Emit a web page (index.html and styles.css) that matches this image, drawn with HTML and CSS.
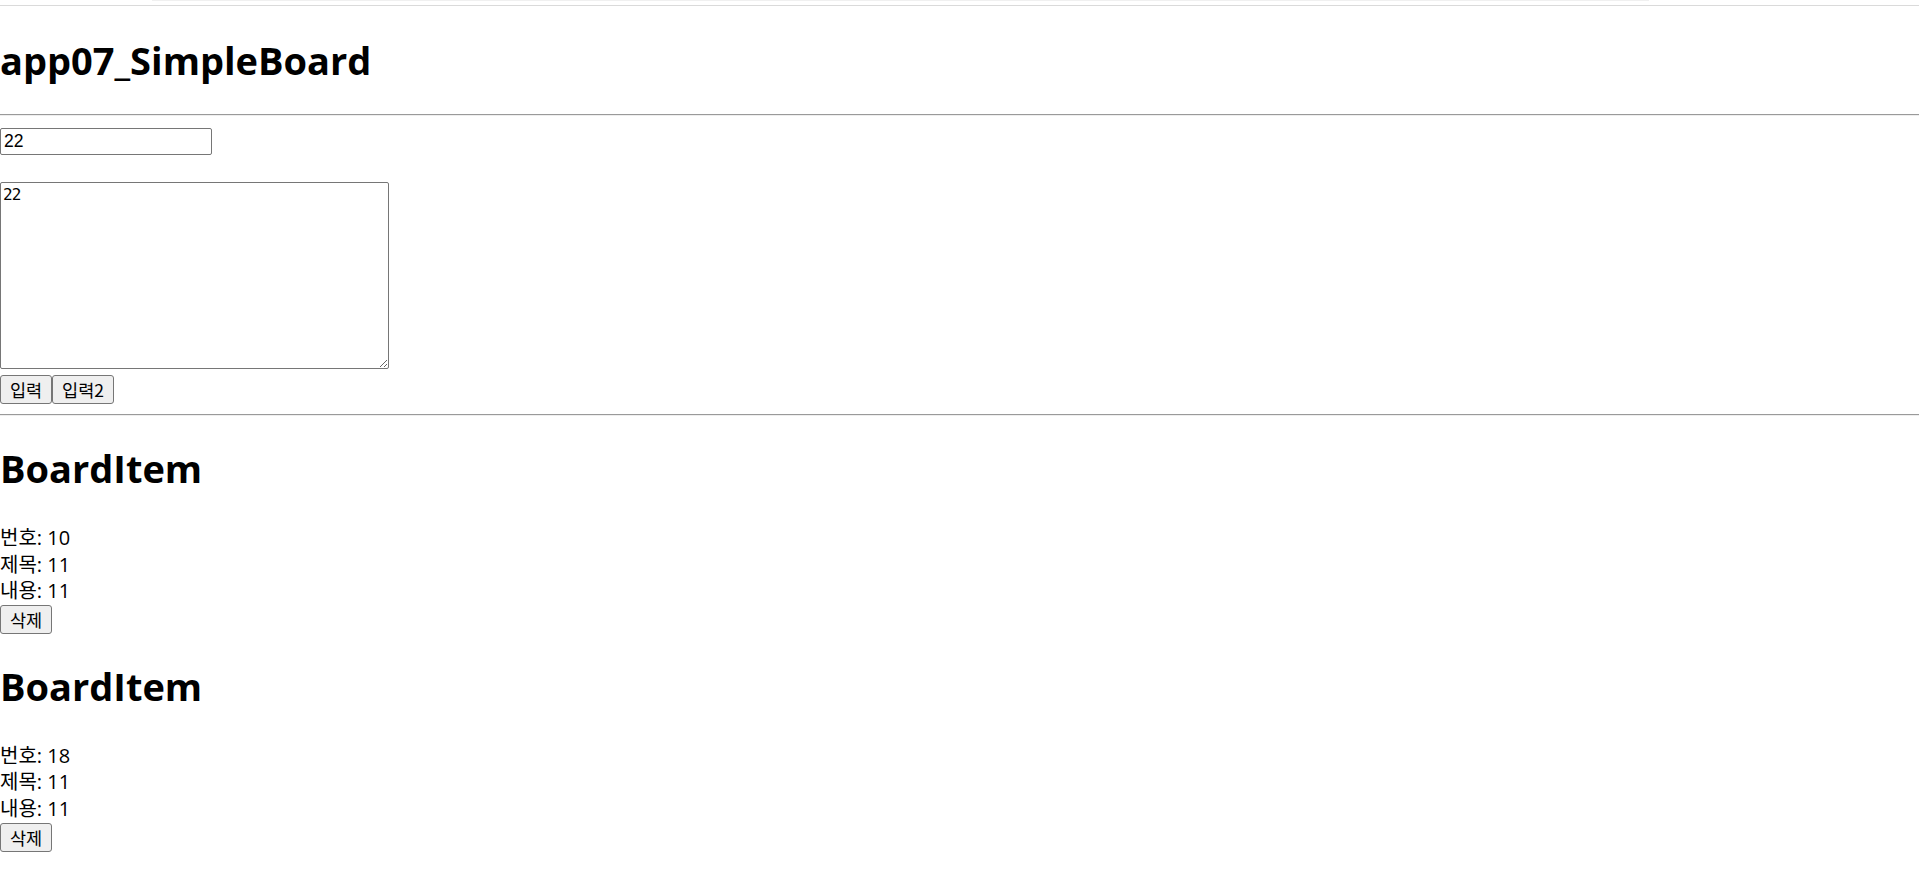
FILE: index.html
```html
<!DOCTYPE html>
<html lang="ko">
<head>
<meta charset="utf-8">
<title>app07_SimpleBoard</title>
<link rel="stylesheet" href="styles.css">
</head>
<body>
<div class="topbar"><div class="topband"></div></div>
<div class="app">
  <h1 class="title">app07_SimpleBoard</h1>
  <hr class="rule">
  <div class="form">
    <div class="row"><input class="field" type="text" value="22"></div>
    <div class="row"><textarea class="area">22</textarea></div>
    <div class="buttons"><button class="btn btn-a">입력</button><button class="btn btn-b">입력2</button></div>
  </div>
  <hr class="rule">
  <div class="item">
    <h1 class="item-title">BoardItem</h1>
    <div class="line">번호: 10</div>
    <div class="line">제목: 11</div>
    <div class="line">내용: 11</div>
    <div class="actions"><button class="btn btn-del">삭제</button></div>
  </div>
  <div class="item">
    <h1 class="item-title">BoardItem</h1>
    <div class="line">번호: 18</div>
    <div class="line">제목: 11</div>
    <div class="line">내용: 11</div>
    <div class="actions"><button class="btn btn-del">삭제</button></div>
  </div>
</div>
</body>
</html>
```

FILE: styles.css
```css
html, body {
  margin: 0;
  padding: 0;
  background: #ffffff;
}
body {
  font-family: "Open Sans", "Noto Sans CJK KR", sans-serif;
  font-size: 20px;
  color: #000;
}
.topbar {
  height: 5px;
  border-bottom: 1px solid #dadada;
  padding-left: 152px;
  padding-right: 270px;
}
.topband {
  height: 1px;
  background: #f0f0f0;
}
.app {
  display: flex;
  flex-direction: column;
  align-items: flex-start;
}
.title {
  font-size: 38px;
  line-height: 53px;
  font-weight: 700;
  margin: 28px 0 27px 0;
}
.rule {
  align-self: stretch;
  margin: 0;
  border: 0;
  border-top: 1px solid #9a9a9a;
  border-bottom: 1px solid #eeeeee;
  height: 0;
}
.form {
  display: flex;
  flex-direction: column;
  align-items: flex-start;
  padding-top: 12px;
}
.row { display: flex; }
.field {
  box-sizing: border-box;
  width: 212px;
  height: 27px;
  margin: 0 0 27px 0;
  padding: 1px 3px;
  border: 1px solid #767676;
  border-radius: 2px;
  font-family: "Liberation Sans", "Noto Sans CJK KR", sans-serif;
  font-size: 17.5px;
  color: #000;
}
.area {
  box-sizing: border-box;
  width: 389px;
  height: 187px;
  margin: 0;
  padding: 2px 2px;
  border: 1px solid #767676;
  border-radius: 2px;
  font-family: "DejaVu Sans Mono", monospace;
  font-size: 16px;
  letter-spacing: -1px;
  line-height: 19px;
  color: #000;
}
.buttons {
  display: flex;
  padding-top: 6px;
  margin-bottom: 10px;
}
.btn {
  box-sizing: border-box;
  height: 29px;
  padding: 0;
  margin: 0;
  background: #efefef;
  border: 1px solid #767676;
  border-radius: 3px;
  font-family: "Noto Sans CJK KR", sans-serif;
  font-size: 17.5px;
  line-height: 25px;
  color: #000;
}
.btn-a { width: 52px; }
.btn-b { width: 62px; }
.btn-del { width: 52px; }
.item {
  display: flex;
  flex-direction: column;
  align-items: flex-start;
}
.item-title {
  font-size: 38px;
  line-height: 53px;
  font-weight: 700;
  margin: 26px 0 30px 0;
}
.item + .item .item-title { margin-top: 26px; }
.line {
  font-size: 20px;
  line-height: 26.6px;
  white-space: nowrap;
}
.actions {
  display: flex;
  padding-top: 0;
}
```
